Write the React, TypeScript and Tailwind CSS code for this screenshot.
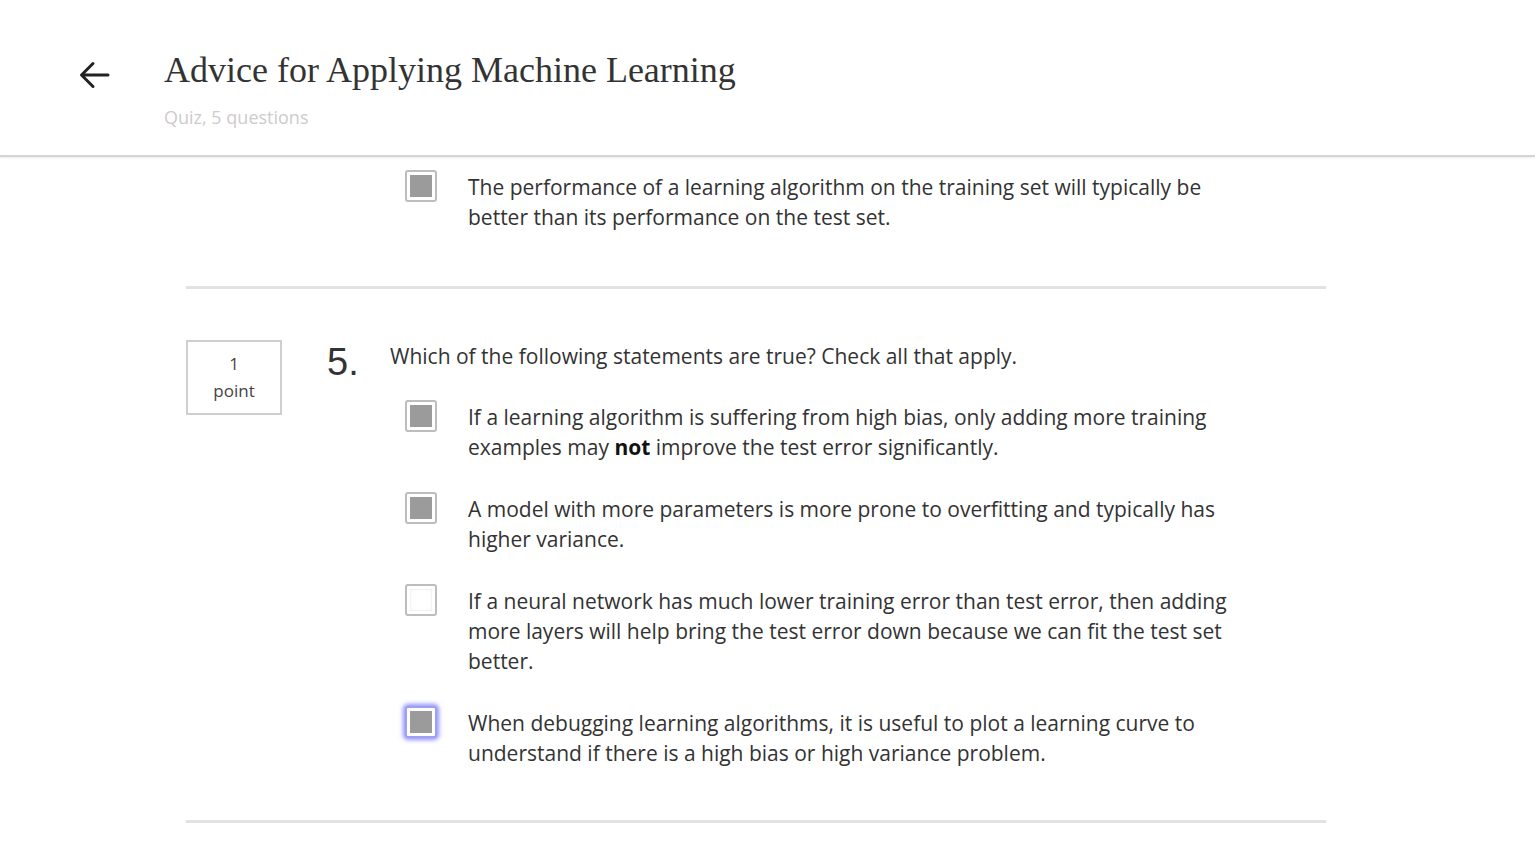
import { ReactNode } from 'react'

function Checkbox({ checked, focused }: { checked: boolean; focused?: boolean }) {
  return (
    <div
      className={
        'mt-[-2px] flex h-[32px] w-[32px] shrink-0 items-center justify-center rounded-[3px] border-2 bg-white ' +
        (focused
          ? 'border-[#a0a0f0] shadow-[0_0_4px_2px_rgba(110,110,255,0.75)]'
          : 'border-[#bdbdbd]')
      }
    >
      {checked ? (
        <div className="h-[22px] w-[22px] bg-[#9b9b9b]" />
      ) : (
        <div className="h-[22px] w-[22px] bg-white shadow-[inset_0_0_3px_rgba(0,0,0,0.12)]" />
      )}
    </div>
  )
}

function Option({
  checked,
  focused,
  children
}: {
  checked: boolean
  focused?: boolean
  children: ReactNode
}) {
  return (
    <div className="flex items-start gap-[31px] pl-[15px]">
      <Checkbox checked={checked} focused={focused} />
      <div className="w-[780px] text-[21px] leading-[30px] text-[#333]">{children}</div>
    </div>
  )
}

export default function App() {
  return (
    <div className="min-h-screen bg-white font-['Open_Sans',sans-serif]">
      <header className="relative z-10 h-[157px] border-b-2 border-[#d4d4d4] bg-white shadow-[0_1px_2px_rgba(0,0,0,0.08)]">
        <div className="flex items-start pt-[48px]">
          <div className="ml-[78px] mt-[12px] w-[86px]">
            <svg width="32" height="30" viewBox="0 0 32 30" fill="none">
              <path
                d="M30 15H4M15 3.5L3.5 15L15 26.5"
                stroke="#222"
                strokeWidth="3"
                strokeLinecap="round"
                strokeLinejoin="round"
              />
            </svg>
          </div>
          <div>
            <h1 className="font-['Liberation_Serif',serif] text-[36px] leading-[44px] text-[#333]">
              Advice for Applying Machine Learning
            </h1>
            <p className="mt-[13px] text-[18px] leading-[24px] text-[#cccccc]">Quiz, 5 questions</p>
          </div>
        </div>
      </header>

      <main className="ml-[186px] w-[1140px]">
        <div className="pl-[204px] pt-[15px]">
          <Option checked>
            The performance of a learning algorithm on the training set will typically be better than
            its performance on the test set.
          </Option>
        </div>

        <div className="mt-[54px] h-[3px] bg-[#e2e2e2]" />

        <section className="flex items-start pt-[51px]">
          <div className="flex h-[75px] w-[96px] shrink-0 flex-col items-center justify-center border-2 border-[#cfcfcf] pb-[2px] text-[17px] leading-[27px] text-[#444]">
            <span>1</span>
            <span>point</span>
          </div>
          <div className="ml-[45px] w-[63px] shrink-0 pt-[2px] font-['Liberation_Sans',sans-serif] text-[38px] leading-[40px] text-[#333]">
            5.
          </div>
          <div className="flex flex-col">
            <p className="mt-[1px] text-[21px] leading-[30px] text-[#333]">
              Which of the following statements are true? Check all that apply.
            </p>
            <div className="mt-[31px] flex flex-col gap-[32px]">
              <Option checked>
                If a learning algorithm is suffering from high bias, only adding more training examples
                may <b className="font-bold text-[#111]">not</b> improve the test error significantly.
              </Option>
              <Option checked>
                A model with more parameters is more prone to overfitting and typically has higher
                variance.
              </Option>
              <Option checked={false}>
                If a neural network has much lower training error than test error, then adding more
                layers will help bring the test error down because we can fit the test set better.
              </Option>
              <Option checked focused>
                When debugging learning algorithms, it is useful to plot a learning curve to understand
                if there is a high bias or high variance problem.
              </Option>
            </div>
          </div>
        </section>

        <div className="mt-[52px] h-[3px] bg-[#e2e2e2]" />
      </main>
    </div>
  )
}
